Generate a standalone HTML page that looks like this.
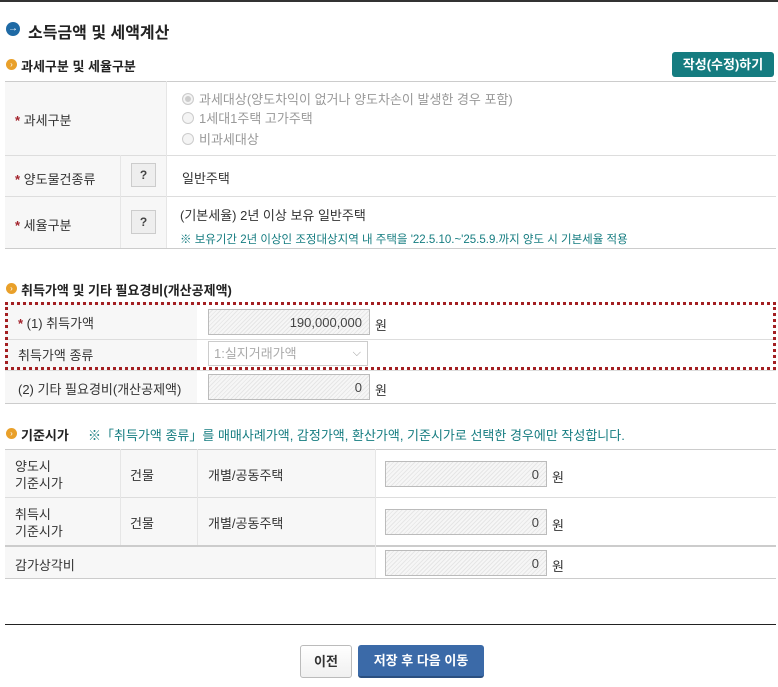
<!DOCTYPE html>
<html><head><meta charset="utf-8"><style>
*{box-sizing:border-box;margin:0;padding:0}
body{width:778px;height:687px;background:#fff;font-family:"Liberation Sans","Noto Sans CJK KR",sans-serif;font-size:13px;color:#333;position:relative;overflow:hidden}
.a{position:absolute}
.h2{font-size:16px;font-weight:bold;color:#222}
.h3{font-size:13px;font-weight:bold;color:#222}
.dot{width:11px;height:11px;border-radius:50%;background:#e9a02a;display:inline-block;color:#fff;font-size:8px;line-height:11px;text-align:center}
.lab{background:#f7f7f7}
.star{color:#a3232c;font-weight:bold}
.q{width:25px;height:24px;border:1px solid #ccc;background:#eee;text-align:center;line-height:22px;font-weight:bold;font-size:12px;color:#444}
.inp{height:26px;border:1px solid #bbb;background:repeating-linear-gradient(135deg,#f6f6f6 0,#f6f6f6 2px,#e6e6e6 2px,#e6e6e6 3px);text-align:right;padding-right:7px;line-height:25px;color:#444}
.hl{height:1px;background:#ddd}
.vl{width:1px;background:#e6e6e6}
.radio{display:inline-block;width:12px;height:12px;border:1px solid #ccc;border-radius:50%;background:#f4f4f4;vertical-align:-1px;margin-right:5px}
.g{color:#999}
</style></head><body>
<div class="a" style="left:0;top:0;width:778px;height:2px;background:#333"></div>
<div class="a" style="left:6px;top:22px;width:14px;height:14px;border-radius:50%;background:#1f6aa5;color:#fff;font-size:10px;line-height:14px;text-align:center">→</div>
<div class="a h2" style="left:28px;top:19px">소득금액 및 세액계산</div>
<div class="a dot" style="left:6px;top:59px">›</div>
<div class="a h3" style="left:21px;top:56px">과세구분 및 세율구분</div>
<div class="a" style="left:672px;top:52px;width:102px;height:25px;background:#157c80;border-radius:3px;color:#fff;font-weight:bold;text-align:center;line-height:25px">작성(수정)하기</div>

<div class="a lab" style="left:5px;top:81px;width:161px;height:167px"></div>
<div class="a hl" style="left:5px;top:81px;width:771px;background:#ccc"></div>
<div class="a hl" style="left:5px;top:155px;width:771px"></div>
<div class="a hl" style="left:5px;top:196px;width:771px"></div>
<div class="a hl" style="left:5px;top:248px;width:771px;background:#ccc"></div>
<div class="a vl" style="left:166px;top:81px;height:167px"></div>
<div class="a vl" style="left:120px;top:155px;height:93px"></div>
<div class="a" style="left:15px;top:110px"><span class="star">*</span> 과세구분</div>
<div class="a" style="left:15px;top:169px"><span class="star">*</span> 양도물건종류</div>
<div class="a" style="left:15px;top:215px"><span class="star">*</span> 세율구분</div>
<div class="a q" style="left:131px;top:163px">?</div>
<div class="a q" style="left:131px;top:210px">?</div>
<div class="a g" style="left:182px;top:89px"><span class="radio" style="background:#ccc;box-shadow:inset 0 0 0 2px #f4f4f4"></span>과세대상(양도차익이 없거나 양도차손이 발생한 경우 포함)</div>
<div class="a g" style="left:182px;top:108px"><span class="radio"></span>1세대1주택 고가주택</div>
<div class="a g" style="left:182px;top:129px"><span class="radio"></span>비과세대상</div>
<div class="a" style="left:182px;top:168px">일반주택</div>
<div class="a" style="left:180px;top:205px">(기본세율) 2년 이상 보유 일반주택</div>
<div class="a" style="left:180px;top:231px;font-size:11.5px;color:#157c80">※ 보유기간 2년 이상인 조정대상지역 내 주택을 '22.5.10.~'25.5.9.까지 양도 시 기본세율 적용</div>

<div class="a dot" style="left:6px;top:283px">›</div>
<div class="a h3" style="left:21px;top:280px">취득가액 및 기타 필요경비(개산공제액)</div>
<div class="a lab" style="left:5px;top:302px;width:192px;height:101px"></div>
<div class="a hl" style="left:5px;top:339px;width:771px"></div>
<div class="a hl" style="left:5px;top:370px;width:771px"></div>
<div class="a hl" style="left:5px;top:403px;width:771px;background:#ccc"></div>
<div class="a" style="left:5px;top:302px;width:771px;height:68px;border:3px dotted #a31f22"></div>
<div class="a" style="left:18px;top:313px"><span class="star">*</span> (1) 취득가액</div>
<div class="a" style="left:18px;top:345px">취득가액 종류</div>
<div class="a" style="left:18px;top:379px">(2) 기타 필요경비(개산공제액)</div>
<div class="a inp" style="left:208px;top:309px;width:162px">190,000,000</div>
<div class="a" style="left:375px;top:315px">원</div>
<div class="a" style="left:208px;top:341px;width:160px;height:25px;border:1px solid #ccc;background:#fff;color:#aaa;line-height:23px;padding-left:5px">1:실지거래가액<span style="position:absolute;right:6px;color:#999;font-size:11px">⌵</span></div>
<div class="a inp" style="left:208px;top:374px;width:162px">0</div>
<div class="a" style="left:375px;top:380px">원</div>

<div class="a dot" style="left:6px;top:428px">›</div>
<div class="a h3" style="left:21px;top:425px">기준시가</div>
<div class="a" style="left:88px;top:425px;color:#157c80">※「취득가액 종류」를 매매사례가액, 감정가액, 환산가액, 기준시가로 선택한 경우에만 작성합니다.</div>
<div class="a lab" style="left:5px;top:449px;width:370px;height:129px"></div>
<div class="a hl" style="left:5px;top:449px;width:771px;background:#ccc"></div>
<div class="a hl" style="left:5px;top:497px;width:771px"></div>
<div class="a" style="left:5px;top:545px;width:771px;height:2px;background:#ccc"></div>
<div class="a hl" style="left:5px;top:578px;width:771px;background:#ccc"></div>
<div class="a vl" style="left:120px;top:449px;height:96px"></div>
<div class="a vl" style="left:197px;top:449px;height:96px"></div>
<div class="a vl" style="left:375px;top:449px;height:129px"></div>
<div class="a" style="left:15px;top:458px;line-height:17px">양도시<br>기준시가</div>
<div class="a" style="left:15px;top:506px;line-height:17px">취득시<br>기준시가</div>
<div class="a" style="left:130px;top:465px">건물</div>
<div class="a" style="left:130px;top:513px">건물</div>
<div class="a" style="left:208px;top:465px">개별/공동주택</div>
<div class="a" style="left:208px;top:513px">개별/공동주택</div>
<div class="a" style="left:15px;top:555px">감가상각비</div>
<div class="a inp" style="left:385px;top:461px;width:162px">0</div>
<div class="a" style="left:552px;top:467px">원</div>
<div class="a inp" style="left:385px;top:509px;width:162px">0</div>
<div class="a" style="left:552px;top:515px">원</div>
<div class="a inp" style="left:385px;top:550px;width:162px">0</div>
<div class="a" style="left:552px;top:556px">원</div>

<div class="a" style="left:5px;top:624px;width:771px;height:1px;background:#222"></div>
<div class="a" style="left:300px;top:645px;width:52px;height:33px;border:1px solid #bbb;border-radius:3px;background:linear-gradient(#fff,#f0f0f0);text-align:center;line-height:31px;font-weight:bold;color:#333">이전</div>
<div class="a" style="left:358px;top:645px;width:126px;height:33px;border-radius:3px;background:#3b6aa8;border-bottom:2px solid #2a4f80;text-align:center;line-height:31px;font-weight:bold;color:#fff">저장 후 다음 이동</div>
</body></html>
